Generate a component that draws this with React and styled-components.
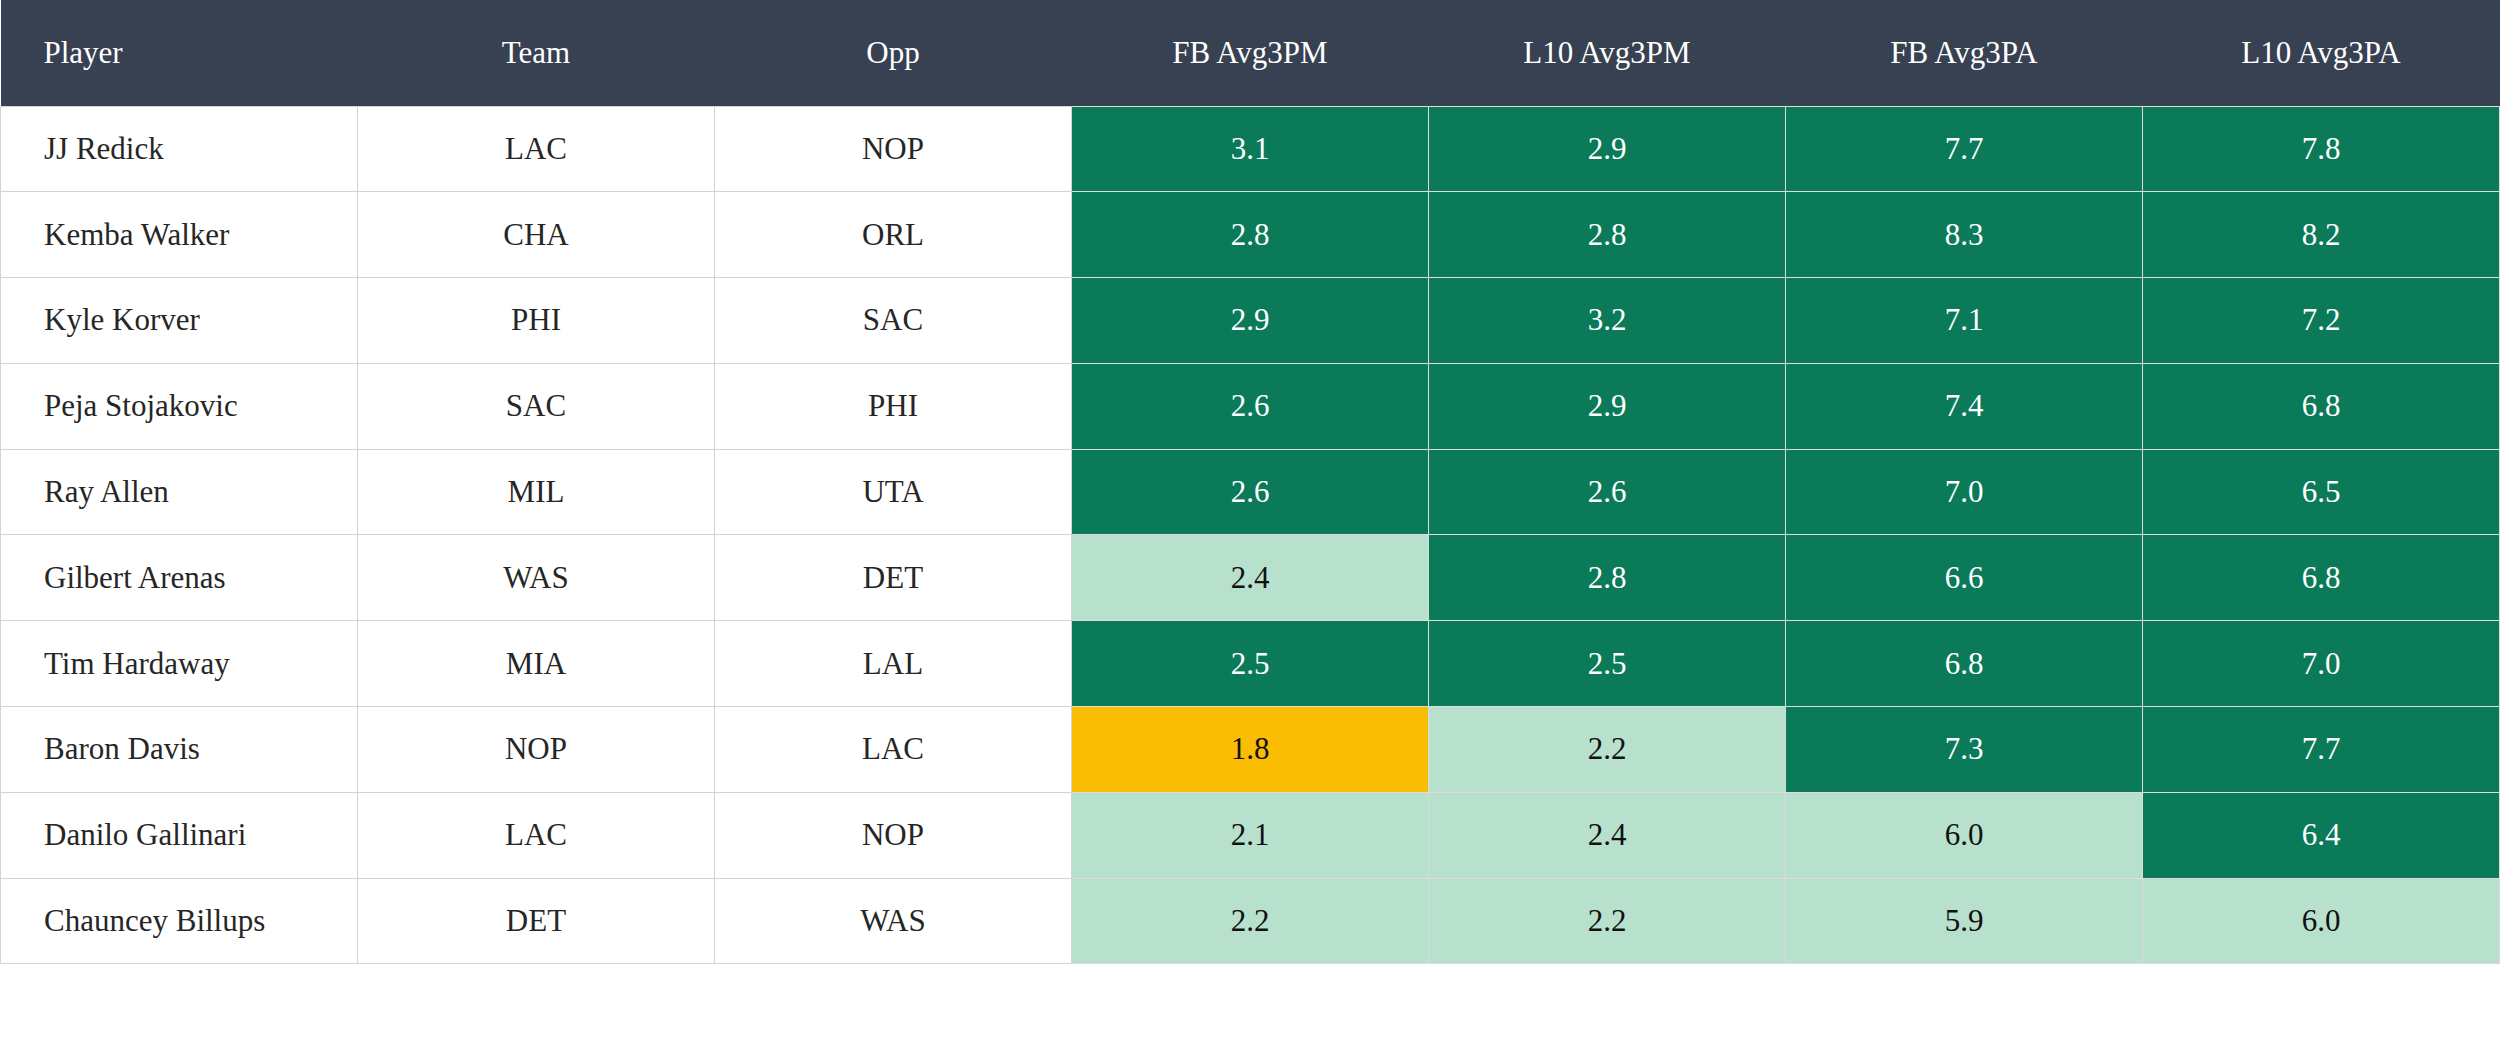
import React from "react";
import styled, { createGlobalStyle } from "styled-components";

const GlobalStyle = createGlobalStyle`
  html, body {
    margin: 0;
    padding: 0;
    background: #ffffff;
  }
  body {
    font-family: "Liberation Serif", "Times New Roman", serif;
  }
`;

const Table = styled.table`
  width: 100%;
  border-collapse: collapse;
  table-layout: fixed;
  font-family: "Liberation Serif", "Times New Roman", serif;
  font-size: 31px;
`;

const HeadRow = styled.tr`
  height: 106px;
  background: #374151;
`;

const HeadCell = styled.th`
  color: #ffffff;
  font-weight: 400;
  text-align: ${(p) => (p.$left ? "left" : "center")};
  padding: 0 0 0 ${(p) => (p.$left ? "43px" : "0")};
  border: none;
`;

const Row = styled.tr`
  height: 85.8px;
`;

const TextCell = styled.td`
  color: #262626;
  text-align: ${(p) => (p.$left ? "left" : "center")};
  padding: 0 0 0 ${(p) => (p.$left ? "43px" : "0")};
  border: 1px solid #cfd4dc;
  background: #ffffff;
`;

const tones = {
  good: { bg: "#0b7a59", fg: "#ffffff" },
  ok: { bg: "#b7e1cd", fg: "#111111" },
  low: { bg: "#fbbc04", fg: "#111111" },
};

const StatCell = styled.td`
  text-align: center;
  background: ${(p) => tones[p.$tone].bg};
  color: ${(p) => tones[p.$tone].fg};
  border: 1px solid #dcdcdc;
`;

const columns = ["Player", "Team", "Opp", "FB Avg3PM", "L10 Avg3PM", "FB Avg3PA", "L10 Avg3PA"];

const players = [
  ["JJ Redick", "LAC", "NOP", "3.1", "2.9", "7.7", "7.8"],
  ["Kemba Walker", "CHA", "ORL", "2.8", "2.8", "8.3", "8.2"],
  ["Kyle Korver", "PHI", "SAC", "2.9", "3.2", "7.1", "7.2"],
  ["Peja Stojakovic", "SAC", "PHI", "2.6", "2.9", "7.4", "6.8"],
  ["Ray Allen", "MIL", "UTA", "2.6", "2.6", "7.0", "6.5"],
  ["Gilbert Arenas", "WAS", "DET", "2.4", "2.8", "6.6", "6.8"],
  ["Tim Hardaway", "MIA", "LAL", "2.5", "2.5", "6.8", "7.0"],
  ["Baron Davis", "NOP", "LAC", "1.8", "2.2", "7.3", "7.7"],
  ["Danilo Gallinari", "LAC", "NOP", "2.1", "2.4", "6.0", "6.4"],
  ["Chauncey Billups", "DET", "WAS", "2.2", "2.2", "5.9", "6.0"],
];

// made threes vs attempted threes use different cut-offs
const toneFor = (value, isMade) => {
  const v = parseFloat(value);
  if (isMade) {
    if (v >= 2.5) return "good";
    if (v >= 2) return "ok";
    return "low";
  }
  if (v >= 6.2) return "good";
  if (v >= 5) return "ok";
  return "low";
};

const App = () => {
  return (
    <>
      <GlobalStyle />
      <Table>
        <thead>
          <HeadRow>
            {columns.map((c, i) => (
              <HeadCell key={c} $left={i === 0}>
                {c}
              </HeadCell>
            ))}
          </HeadRow>
        </thead>
        <tbody>
          {players.map(([name, team, opp, ...stats]) => (
            <Row key={name}>
              <TextCell $left>{name}</TextCell>
              <TextCell>{team}</TextCell>
              <TextCell>{opp}</TextCell>
              {stats.map((s, i) => (
                <StatCell key={i} $tone={toneFor(s, i < 2)}>
                  {s}
                </StatCell>
              ))}
            </Row>
          ))}
        </tbody>
      </Table>
    </>
  );
};

export default App;
